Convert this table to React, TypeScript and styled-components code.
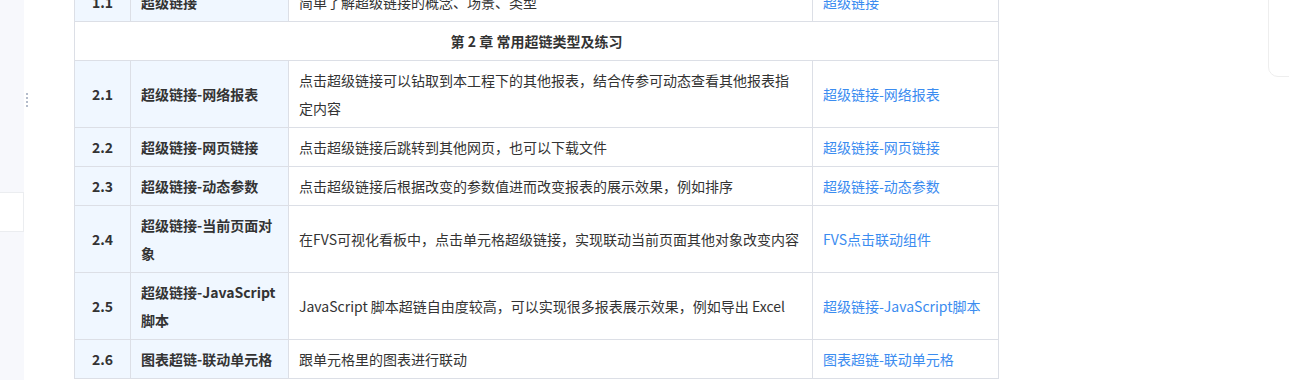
import styled, { createGlobalStyle } from "styled-components";

const GlobalStyle = createGlobalStyle`
  html, body {
    margin: 0;
    padding: 0;
    background: #ffffff;
    overflow: hidden;
  }
  body {
    font-family: "Noto Sans CJK SC", "Noto Sans", sans-serif;
    color: #333333;
  }
`;

const Page = styled.div`
  display: flex;
  width: 1289px;
  height: 380px;
  position: relative;
  overflow: hidden;
`;

const Sidebar = styled.aside`
  width: 24px;
  flex-shrink: 0;
  background: #f7f8fc;
  display: flex;
  flex-direction: column;
`;

const SideItem = styled.div`
  margin-top: 192px;
  height: 38px;
  background: #ffffff;
  border-top: 1px solid #ebedf0;
  border-bottom: 1px solid #ebedf0;
  border-right: 1px solid #ebedf0;
`;

const DragHandle = styled.div`
  position: absolute;
  left: 26px;
  top: 93px;
  display: flex;
  flex-direction: column;
  gap: 2px;
  span {
    width: 2px;
    height: 2px;
    background: #b4bccb;
  }
`;

const Main = styled.main`
  flex: 1;
  padding-left: 50px;
`;

const Table = styled.table`
  margin-top: -18px;
  width: 924px;
  border-collapse: collapse;
  table-layout: fixed;
  font-size: 14px;
  line-height: 28px;
`;

const Cell = styled.td<{ $shade?: boolean; $center?: boolean; $bold?: boolean }>`
  border: 1px solid #dcdfe6;
  padding: 5px 10px;
  vertical-align: middle;
  background: ${(p) => (p.$shade ? "#f0f7ff" : "#ffffff")};
  text-align: ${(p) => (p.$center ? "center" : "left")};
  font-weight: ${(p) => (p.$bold ? 700 : 400)};
  color: #333333;
  word-break: break-all;
`;

const DescCell = styled(Cell)`
  padding-right: 12px;
`;

const ChapterCell = styled.td`
  border: 1px solid #dcdfe6;
  padding: 5px 10px;
  text-align: center;
  font-weight: 700;
  color: #333333;
`;

const Link = styled.a`
  color: #3b8cf0;
  text-decoration: none;
`;

const FloatPanel = styled.div`
  position: absolute;
  right: -10px;
  top: -10px;
  width: 29px;
  height: 85px;
  background: #ffffff;
  border: 1px solid #eeeeee;
  border-radius: 10px;
`;

type Lesson = { no: string; title: string; desc: string; link: string };

const lessons: Lesson[] = [
  {
    no: "2.1",
    title: "超级链接-网络报表",
    desc: "点击超级链接可以钻取到本工程下的其他报表，结合传参可动态查看其他报表指定内容",
    link: "超级链接-网络报表",
  },
  {
    no: "2.2",
    title: "超级链接-网页链接",
    desc: "点击超级链接后跳转到其他网页，也可以下载文件",
    link: "超级链接-网页链接",
  },
  {
    no: "2.3",
    title: "超级链接-动态参数",
    desc: "点击超级链接后根据改变的参数值进而改变报表的展示效果，例如排序",
    link: "超级链接-动态参数",
  },
  {
    no: "2.4",
    title: "超级链接-当前页面对象",
    desc: "在FVS可视化看板中，点击单元格超级链接，实现联动当前页面其他对象改变内容",
    link: "FVS点击联动组件",
  },
  {
    no: "2.5",
    title: "超级链接-JavaScript脚本",
    desc: "JavaScript 脚本超链自由度较高，可以实现很多报表展示效果，例如导出 Excel",
    link: "超级链接-JavaScript脚本",
  },
  {
    no: "2.6",
    title: "图表超链-联动单元格",
    desc: "跟单元格里的图表进行联动",
    link: "图表超链-联动单元格",
  },
];

export default function App() {
  return (
    <>
      <GlobalStyle />
      <Page>
        <Sidebar>
          <SideItem />
        </Sidebar>
        <DragHandle>
          <span />
          <span />
          <span />
          <span />
        </DragHandle>
        <Main>
          <Table>
            <colgroup>
              <col style={{ width: 56 }} />
              <col style={{ width: 158 }} />
              <col style={{ width: 524 }} />
              <col style={{ width: 186 }} />
            </colgroup>
            <tbody>
              <tr>
                <Cell $shade $center $bold>1.1</Cell>
                <Cell $shade $bold>超级链接</Cell>
                <DescCell>简单了解超级链接的概念、场景、类型</DescCell>
                <Cell>
                  <Link href="#">超级链接</Link>
                </Cell>
              </tr>
              <tr>
                <ChapterCell colSpan={4}>第 2 章 常用超链类型及练习</ChapterCell>
              </tr>
              {lessons.map((l) => (
                <tr key={l.no}>
                  <Cell $shade $center $bold>{l.no}</Cell>
                  <Cell $shade $bold>{l.title}</Cell>
                  <DescCell>{l.desc}</DescCell>
                  <Cell>
                    <Link href="#">{l.link}</Link>
                  </Cell>
                </tr>
              ))}
            </tbody>
          </Table>
        </Main>
        <FloatPanel />
      </Page>
    </>
  );
}
